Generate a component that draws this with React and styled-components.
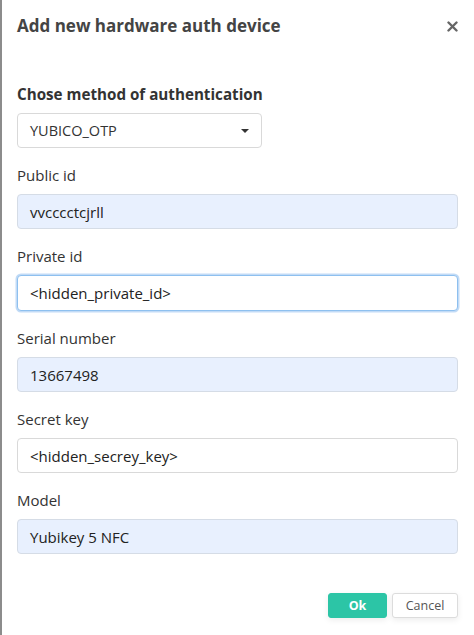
import React from "react";
import styled, { createGlobalStyle } from "styled-components";

const Global = createGlobalStyle`
  html, body { margin: 0; padding: 0; background: #fff; }
  body { font-family: "Open Sans", "Liberation Sans", sans-serif; }
  * { box-sizing: border-box; }
`;

const Modal = styled.div`
  width: 474px;
  height: 635px;
  border-left: 2px solid #8c8c8c;
  background: #fff;
  display: flex;
  flex-direction: column;
  padding: 0 16px 0 15px;
`;

const Header = styled.div`
  display: flex;
  align-items: center;
  justify-content: space-between;
  height: 52px;
`;

const Title = styled.h2`
  margin: 0;
  font-size: 17px;
  font-weight: 700;
  color: #444;
  line-height: 24px;
`;

const Close = styled.button`
  border: none;
  background: none;
  padding: 0;
  margin-right: -1px;
  width: 14px;
  height: 14px;
  display: flex;
  align-items: center;
  justify-content: center;
  cursor: pointer;
`;

const Body = styled.div`
  display: flex;
  flex-direction: column;
  gap: 17px;
  padding-top: 32px;
`;

const Field = styled.div`
  display: flex;
  flex-direction: column;
  gap: 9px;
`;

const Label = styled.label`
  font-size: ${(p) => (p.$strong ? "15.2px" : "15px")};
  font-weight: ${(p) => (p.$strong ? 700 : 400)};
  color: #333;
  line-height: 20px;
`;

const Select = styled.div`
  width: 245px;
  height: 35px;
  border: 1px solid #d9d9d9;
  border-radius: 4px;
  display: flex;
  align-items: center;
  justify-content: space-between;
  padding: 0 12px 0 12px;
  font-size: 14.5px;
  color: #333;
`;

const Caret = styled.span`
  width: 0;
  height: 0;
  border-left: 4px solid transparent;
  border-right: 4px solid transparent;
  border-top: 4px solid #333;
`;

const Input = styled.div`
  height: ${(p) => (p.$focused ? "36px" : "35px")};
  border-radius: 4px;
  border: 1px solid ${(p) => (p.$focused ? "#8ec0ef" : p.$filled ? "#d5dce6" : "#d9d9d9")};
  background: ${(p) => (p.$filled ? "#e8f0fe" : "#fff")};
  box-shadow: ${(p) => (p.$focused ? "0 0 0 1.5px rgba(120,175,235,0.45)" : "none")};
  display: flex;
  align-items: center;
  padding: 0 12px;
  font-size: 15px;
  color: #222;
`;

const Footer = styled.div`
  display: flex;
  justify-content: flex-end;
  gap: 5px;
  margin-top: 39px;
`;

const Button = styled.button`
  height: 25px;
  width: ${(p) => (p.$primary ? "59px" : "66px")};
  border-radius: 3px;
  border: 1px solid ${(p) => (p.$primary ? "#2cc5a6" : "#dcdcdc")};
  background: ${(p) => (p.$primary ? "#2cc5a6" : "#fff")};
  color: ${(p) => (p.$primary ? "#fff" : "#555")};
  font-family: "Open Sans", "Liberation Sans", sans-serif;
  font-weight: ${(p) => (p.$primary ? 700 : 400)};
  font-size: 12.5px;
  padding: 0;
  box-shadow: 0 2px 6px rgba(0,0,0,0.08);
`;

const fields = [
  { label: "Public id", value: "vvcccctcjrll", filled: true },
  { label: "Private id", value: "<hidden_private_id>", focused: true },
  { label: "Serial number", value: "13667498", filled: true },
  { label: "Secret key", value: "<hidden_secrey_key>" },
  { label: "Model", value: "Yubikey 5 NFC", filled: true },
];

export default function App() {
  return (
    <>
      <Global />
      <Modal>
        <Header>
          <Title>Add new hardware auth device</Title>
          <Close aria-label="close">
            <svg width="11" height="11" viewBox="0 0 11 11">
              <path d="M1.5 1.5 L9.5 9.5 M9.5 1.5 L1.5 9.5" stroke="#666" strokeWidth="2.4" strokeLinecap="round" />
            </svg>
          </Close>
        </Header>
        <Body>
          <Field>
            <Label $strong>Chose method of authentication</Label>
            <Select>
              <span>YUBICO_OTP</span>
              <Caret />
            </Select>
          </Field>
          {fields.map((f) => (
            <Field key={f.label}>
              <Label>{f.label}</Label>
              <Input $filled={f.filled} $focused={f.focused}>{f.value}</Input>
            </Field>
          ))}
        </Body>
        <Footer>
          <Button $primary>Ok</Button>
          <Button>Cancel</Button>
        </Footer>
      </Modal>
    </>
  );
}
